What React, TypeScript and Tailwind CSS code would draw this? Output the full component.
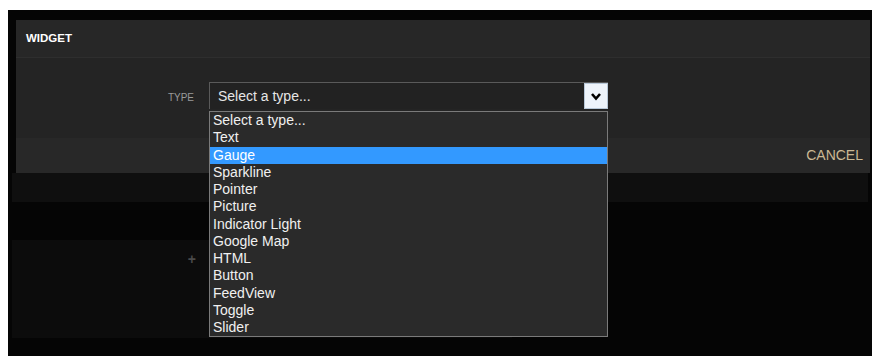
import React from 'react';

const TYPES = [
  'Select a type...',
  'Text',
  'Gauge',
  'Sparkline',
  'Pointer',
  'Picture',
  'Indicator Light',
  'Google Map',
  'HTML',
  'Button',
  'FeedView',
  'Toggle',
  'Slider',
];

function TypeSelect(): JSX.Element {
  return (
    <div className="relative w-[399px]">
      <div className="flex items-center h-[27px] bg-[#222222] border-t border-l border-[#5a5a5a]">
        <span className="flex-1 pl-[8px] text-[14px] text-[#e6e6e6]">Select a type...</span>
        <span className="flex items-center justify-center w-[24px] h-[26px] bg-[#eef4fb] border border-[#b8c8d8]">
          <svg width="12" height="9" viewBox="0 0 12 9">
            <polyline points="2,2 6,6.5 10,2" fill="none" stroke="#000" strokeWidth="2.6" />
          </svg>
        </span>
      </div>
      <ul className="absolute left-0 top-[29px] z-10 w-[399px] bg-[#2a2a2a] border border-[#7a7a7a]">
        {TYPES.map((t) => (
          <li
            key={t}
            className={
              t === 'Gauge'
                ? 'h-[17.25px] leading-[17.25px] pl-[3px] text-[14px] bg-[#3399ff] text-white'
                : 'h-[17.25px] leading-[17.25px] pl-[3px] text-[14px] text-[#f0f0f0]'
            }
          >
            {t}
          </li>
        ))}
      </ul>
    </div>
  );
}

export default function App(): JSX.Element {
  return (
    <div className="w-[881px] h-[361px] bg-white pt-[10px] pl-[8px] font-['Liberation_Sans',Arial,sans-serif]">
      <div className="flex flex-col w-[864px] h-[346px] bg-[#050505]">
        <div className="flex flex-col ml-[8px] mt-[10px] w-[854px]">
          <div className="flex items-center h-[38px] pl-[10px] bg-[#272727] border-b border-[#2e2e2e]">
            <h2 className="text-[11.5px] font-bold text-white">WIDGET</h2>
          </div>
          <div className="flex items-start h-[80px] pt-[24px] bg-[#242424]">
            <label className="w-[178px] pt-[8px] text-right text-[10px] text-[#9a9a9a]">TYPE</label>
            <div className="ml-[15px]">
              <TypeSelect />
            </div>
          </div>
          <div className="flex items-center justify-end h-[35px] pr-[7px] bg-[#282828]">
            <button type="button" className="text-[14px] text-[#cbb894]">
              CANCEL
            </button>
          </div>
        </div>
        <div className="ml-[4px] w-[856px] h-[29px] bg-[#0f0f0f]" />
        <div className="ml-[4px] mt-[38px] flex items-start justify-end w-[500px] h-[98px] pr-[316px] pt-[9px] bg-[#0c0c0c]">
          <span className="text-[14px] font-bold text-[#4a4a4a]">+</span>
        </div>
      </div>
    </div>
  );
}
